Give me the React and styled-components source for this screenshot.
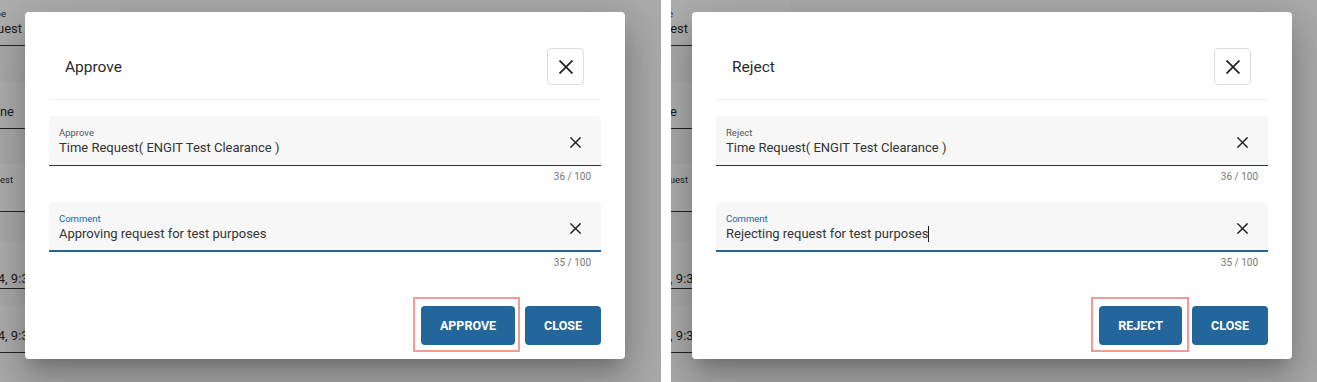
import React from 'react';
import styled, { createGlobalStyle } from 'styled-components';

const Global = createGlobalStyle`
  html, body { margin: 0; padding: 0; background: #fff; overflow: hidden; }
  body { font-family: Roboto, "Liberation Sans", Arial, sans-serif; }
  * { box-sizing: border-box; }
`;

const Stage = styled.div`
  display: flex;
  gap: 10px;
  width: 1317px;
  height: 382px;
  background: #fff;
`;

const Panel = styled.div`
  position: relative;
  flex: 0 0 ${(p) => p.$w}px;
  height: 382px;
  overflow: hidden;
  background: #aaaaaa;
`;

/* page behind the modal backdrop */
const Underlay = styled.div`
  display: flex;
  flex-direction: column;
  width: 120px;
  color: #1c1c1c;
`;

const UnderField = styled.div`
  display: flex;
  flex-direction: column;
  height: ${(p) => p.$h}px;
  margin-top: ${(p) => p.$mt}px;
  padding-top: ${(p) => p.$pt}px;
  border-bottom: 1px solid #222;
  background: rgba(255, 255, 255, 0.05);
`;

const UnderLabel = styled.div`
  display: flex;
  justify-content: flex-end;
  width: ${(p) => p.$end}px;
  white-space: nowrap;
  font-size: 9.5px;
  line-height: 13px;
  height: 13px;
`;

const UnderValue = styled.div`
  display: flex;
  justify-content: flex-end;
  width: ${(p) => p.$end}px;
  white-space: nowrap;
  font-size: 13px;
  line-height: 18px;
  height: 18px;
`;

const Dialog = styled.div`
  position: absolute;
  left: ${(p) => p.$left}px;
  top: 12px;
  width: 600px;
  height: 347px;
  background: #fff;
  border-radius: 4px;
  padding: 0 24px 14px;
  display: flex;
  flex-direction: column;
  box-shadow: 0 11px 15px -7px rgba(0, 0, 0, 0.2),
    0 24px 38px 3px rgba(0, 0, 0, 0.14), 0 9px 46px 8px rgba(0, 0, 0, 0.12);
`;

const Header = styled.div`
  display: flex;
  align-items: center;
  justify-content: space-between;
  padding: 36px 17px 14px 16px;
  border-bottom: 1px solid #eeeeee;
`;

const Title = styled.h2`
  margin: 0;
  font-size: 15.5px;
  font-weight: 400;
  color: #2b2b2b;
`;

const IconButton = styled.button`
  width: 37px;
  height: 37px;
  padding: 0;
  border: 1.5px solid #dddddd;
  border-radius: 4px;
  background: #fff;
  display: flex;
  align-items: center;
  justify-content: center;
  cursor: pointer;
`;

const Field = styled.div`
  display: flex;
  height: 50px;
  margin-top: ${(p) => p.$mt}px;
  padding: 10px 20px 0 10px;
  background: #f7f7f7;
  border-radius: 4px 4px 0 0;
  border-bottom: ${(p) => (p.$focused ? '2px solid #22669b' : '1px solid #333')};
`;

const FieldBody = styled.div`
  flex: 1;
  display: flex;
  flex-direction: column;
`;

const FieldLabel = styled.label`
  font-size: 9.5px;
  line-height: 13px;
  color: ${(p) => (p.$focused ? '#22669b' : '#555')};
`;

const FieldValue = styled.div`
  font-size: 13px;
  line-height: 18px;
  color: #333;
  white-space: nowrap;
  display: flex;
  align-items: center;
`;

const Caret = styled.span`
  display: inline-block;
  width: 1px;
  height: 16px;
  background: #222;
`;

const ClearIcon = styled.span`
  display: flex;
  margin-top: 11px;
  width: 11px;
  height: 11px;
`;

const Helper = styled.div`
  display: flex;
  justify-content: flex-end;
  padding: 0 10px;
  margin-top: 4px;
  font-size: 10px;
  line-height: 14px;
  color: #777;
`;

const Footer = styled.div`
  margin-top: auto;
  display: flex;
  justify-content: flex-end;
  gap: 10px;
`;

const Highlight = styled.span`
  position: relative;
  display: inline-flex;
  &::after {
    content: '';
    position: absolute;
    top: -9px;
    bottom: -7px;
    left: -8px;
    right: ${(p) => p.$r}px;
    border: 2px solid #f29a9a;
    pointer-events: none;
  }
`;

const Button = styled.button`
  height: 39px;
  padding: 0 19px;
  border: none;
  border-radius: 4px;
  background: #22669b;
  color: #fff;
  font-family: Roboto, "Liberation Sans", Arial, sans-serif;
  font-size: 12.5px;
  font-weight: 700;
  text-transform: uppercase;
  cursor: pointer;
`;

const XIcon = ({ size, stroke }) => (
  <svg width={size} height={size} viewBox="0 0 12 12" fill="none">
    <path d="M1 1L11 11M11 1L1 11" stroke="#222" strokeWidth={stroke} strokeLinecap="square" />
  </svg>
);

const TextField = ({ label, value, counter, focused, caret, mt }) => (
  <>
    <Field $mt={mt} $focused={focused}>
      <FieldBody>
        <FieldLabel $focused={focused}>{label}</FieldLabel>
        <FieldValue>
          {value}
          {caret && <Caret />}
        </FieldValue>
      </FieldBody>
      <ClearIcon>
        <XIcon size={11} stroke={1.6} />
      </ClearIcon>
    </Field>
    <Helper>{counter}</Helper>
  </>
);

const Backdrop = ({ ends }) => (
  <Underlay>
    <UnderField $h={48} $mt={-2} $pt={9}>
      <UnderLabel $end={ends.a1}>Request Type</UnderLabel>
      <UnderValue $end={ends.a2}>Time Request</UnderValue>
    </UnderField>
    <UnderField $h={47} $mt={36} $pt={21}>
      <UnderValue $end={ends.b}>Offline</UnderValue>
    </UnderField>
    <UnderField $h={48} $mt={35} $pt={9}>
      <UnderLabel $end={ends.c}>Time Request</UnderLabel>
    </UnderField>
    <UnderField $h={48} $mt={29} $pt={29}>
      <UnderValue $end={ends.d}>24, 9:30 AM</UnderValue>
    </UnderField>
    <UnderField $h={48} $mt={16} $pt={22}>
      <UnderValue $end={ends.d}>24, 9:30 AM</UnderValue>
    </UnderField>
  </Underlay>
);

const Modal = ({ kind, left, panelWidth, ends, comment, caret, hlRight }) => {
  const title = kind === 'approve' ? 'Approve' : 'Reject';
  return (
    <Panel $w={panelWidth}>
      <Backdrop ends={ends} />
      <Dialog $left={left}>
        <Header>
          <Title>{title}</Title>
          <IconButton aria-label="close">
            <XIcon size={14} stroke={1.5} />
          </IconButton>
        </Header>
        <TextField
          mt={16}
          label={title}
          value="Time Request( ENGIT Test Clearance )"
          counter="36 / 100"
        />
        <TextField
          mt={18}
          label="Comment"
          value={comment}
          counter={`${comment.length} / 100`}
          focused
          caret={caret}
        />
        <Footer>
          <Highlight $r={hlRight}>
            <Button>{title}</Button>
          </Highlight>
          <Button>Close</Button>
        </Footer>
      </Dialog>
    </Panel>
  );
};

export default function App() {
  return (
    <>
      <Global />
      <Stage>
        <Modal
          kind="approve"
          panelWidth={661}
          left={25}
          ends={{ a1: 6, a2: 22, b: 14, c: 13, d: 59 }}
          comment="Approving request for test purposes"
          hlRight={-5}
        />
        <Modal
          kind="reject"
          panelWidth={646}
          left={21}
          ends={{ a1: 2, a2: 17, b: 6, c: 17, d: 53 }}
          comment="Rejecting request for test purposes"
          caret
          hlRight={-7}
        />
      </Stage>
    </>
  );
}
